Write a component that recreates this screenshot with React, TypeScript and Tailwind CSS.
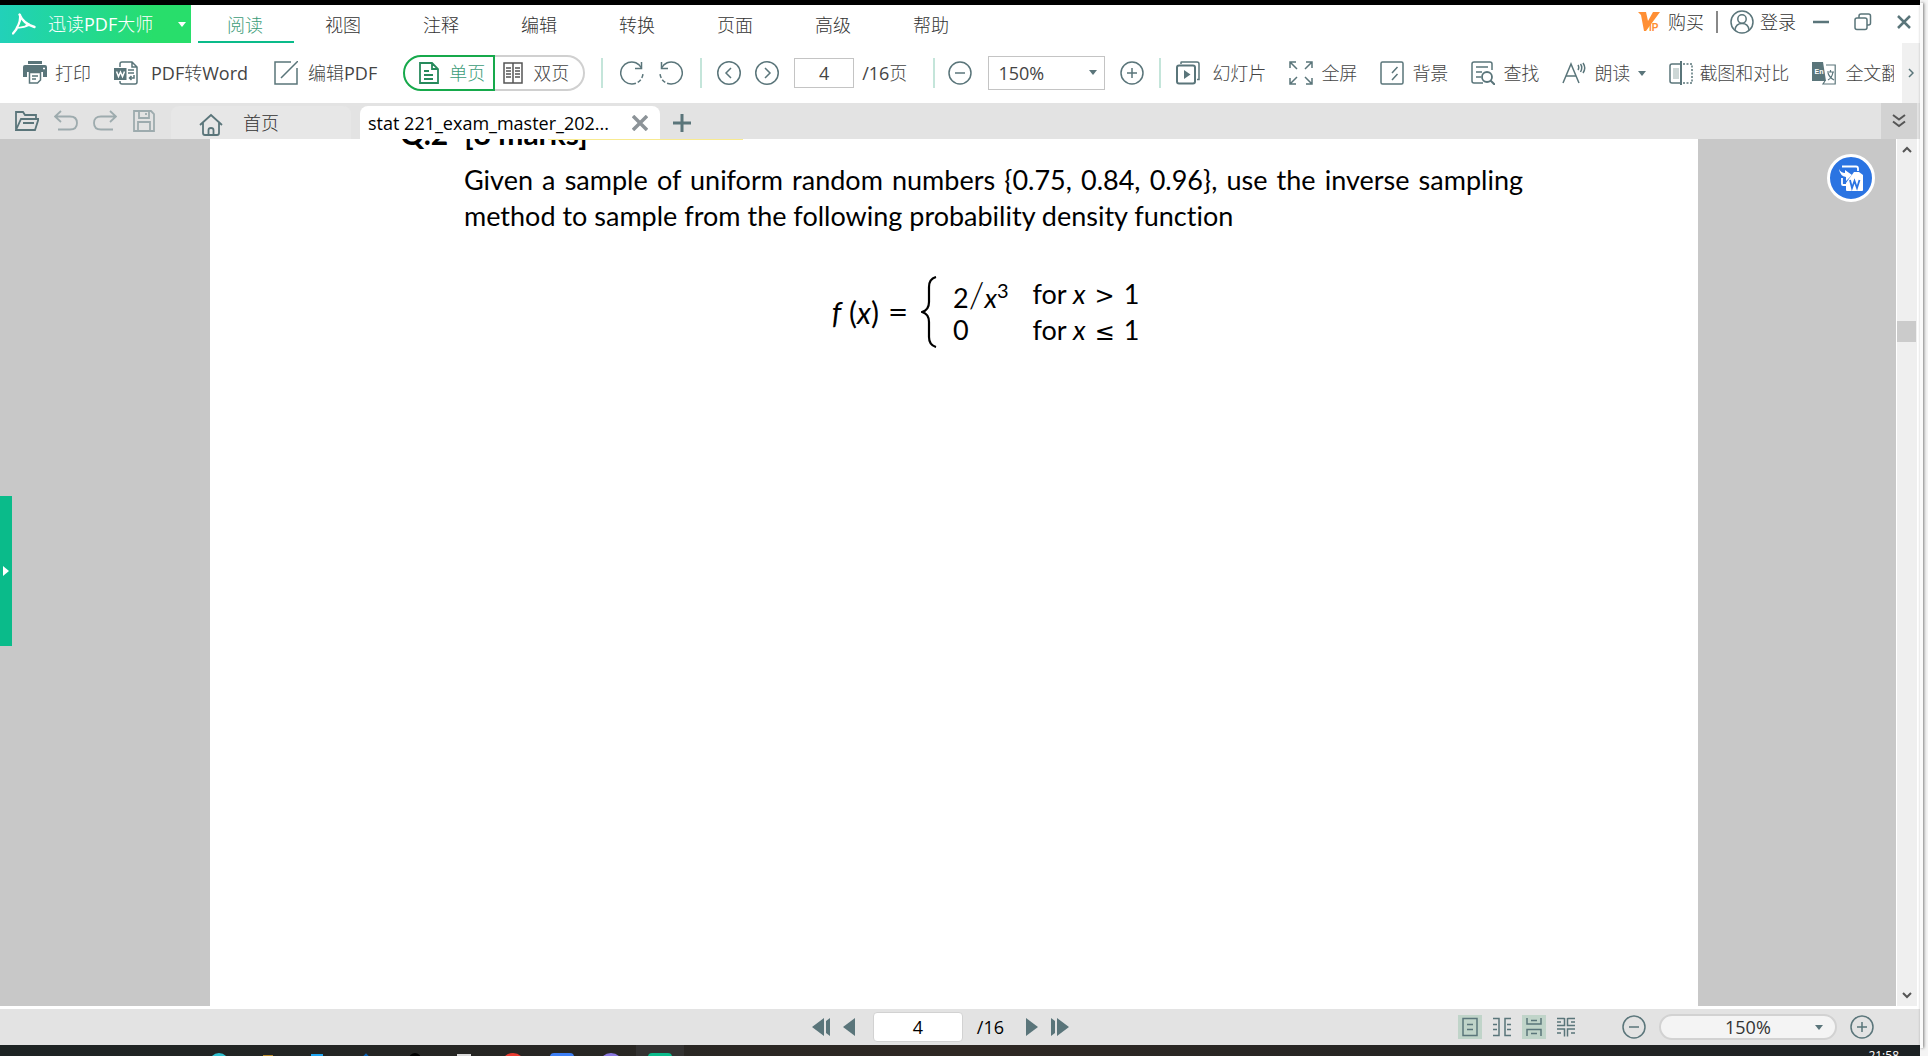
import type { ReactNode } from 'react';

const menu = ['阅读', '视图', '注释', '编辑', '转换', '页面', '高级', '帮助'];

type IconProps = { children: ReactNode; size?: number; className?: string };

const Icon = ({ children, size = 24, className = '' }: IconProps) => (
  <svg
    width={size}
    height={size}
    viewBox="0 0 24 24"
    fill="none"
    stroke="currentColor"
    strokeWidth={1.5}
    className={`shrink-0 text-[#5a757a] ${className}`}
    aria-hidden="true"
  >
    {children}
  </svg>
);

const Caret = ({ className = '' }: { className?: string }) => (
  <svg width={8} height={5} viewBox="0 0 8 5" className={className} aria-hidden="true">
    <path d="M0 0h8L4 5z" fill="currentColor" />
  </svg>
);

const Separator = () => <div className="w-[2px] h-[30px] shrink-0 bg-[#c4e5da]" />;

const MinusCircle = () => (
  <Icon>
    <circle cx="12" cy="12" r="11" />
    <path d="M7 12h10" />
  </Icon>
);

const PlusCircle = () => (
  <Icon>
    <circle cx="12" cy="12" r="11" />
    <path d="M7 12h10M12 7v10" />
  </Icon>
);

const TitleBar = () => (
  <header className="flex items-center justify-between h-[38px] shrink-0">
    <div className="flex h-full">
      <button className="flex items-center w-[191px] h-full pl-3 pr-[5px] text-white bg-linear-to-r from-[#22d1b9] to-[#28de6b] to-80%">
        <svg width={24} height={22} viewBox="0 0 24 22" fill="none" stroke="white" strokeWidth={2.4} className="mr-3" aria-hidden="true">
          <path d="M7.500 1.500c2 5 5 9.500 15 12.500M8 2c1 6-2.500 14-7 18.500M5 14.500c5-.3 8-.5 12-3" strokeLinecap="round" strokeLinejoin="round" />
          <path d="M6.500 14l3-6 4 4.500z" fill="#24d49a" stroke="none" />
        </svg>
        迅读PDF大师
        <Caret className="ml-auto" />
      </button>
      <nav className="flex gap-[2px] ml-[7px]">
        {menu.map((item, i) => (
          <button
            key={item}
            className={`w-[96px] pt-1 pr-[2px] border-b-2 ${i === 0 ? 'border-[#0abb8a] text-[#3c9c78]' : 'border-transparent text-[#333]'}`}
          >
            {item}
          </button>
        ))}
      </nav>
    </div>

    <div className="flex items-center pr-2 pb-1 text-[#333]">
      <button className="flex items-center gap-2">
        <svg width={22} height={22} viewBox="0 0 22 22" className="text-[#ff8f34]" aria-hidden="true">
          <path d="M0 1h8l2 9 5-9h7L8 20H6L3 4z" fill="currentColor" />
          <text x="11" y="20" fontSize="10" fontWeight="700" fill="currentColor" fontFamily="Liberation Sans, sans-serif">
            IP
          </text>
        </svg>
        购买
      </button>
      <div className="w-[2px] h-[22px] mx-3 bg-[#888]" />
      <button className="flex items-center gap-[6px]">
        <Icon>
          <circle cx="12" cy="12" r="11" />
          <circle cx="12" cy="9" r="4.200" />
          <path d="M5 20c.5-4.500 3-6.500 7-6.500s6.500 2 7 6.500" />
        </Icon>
        登录
      </button>
      <button aria-label="最小化" className="ml-4 text-[#5a757a]">
        <svg width={18} height={18} viewBox="0 0 18 18" stroke="currentColor" strokeWidth={2.500}>
          <path d="M1 9h16" />
        </svg>
      </button>
      <button aria-label="还原" className="ml-6 text-[#5a757a]">
        <svg width={18} height={18} viewBox="0 0 18 18" fill="none" stroke="currentColor" strokeWidth={1.500}>
          <rect x="1" y="5" width="12" height="11.500" rx="2" />
          <path d="M5 5V3q0-2 2-2h7.500q2 0 2 2v7q0 2-2 2H13" />
        </svg>
      </button>
      <button aria-label="关闭" className="ml-6 text-[#5a757a]">
        <svg width={16} height={16} viewBox="0 0 16 16" stroke="currentColor" strokeWidth={2.500}>
          <path d="M2 2l12 12M14 2L2 14" />
        </svg>
      </button>
    </div>
  </header>
);

const Toolbar = () => (
  <div className="flex h-[60px] shrink-0 text-[#444]">
    <div className="flex items-center flex-1 min-w-0 mr-2 pl-[23px] overflow-hidden whitespace-nowrap">
      <button className="flex items-center gap-2 mr-[23px]">
        <Icon>
          <path d="M5 0h14v3H5zM0 6q0-2 2-2h20q2 0 2 2v10h-4v-5H4v5H0z" fill="currentColor" stroke="none" />
          <path d="M6.500 11.500h11V19l-3 3h-8z" />
          <path d="M9 15h6M9 18h4" />
          <path d="M20 7.500h2" stroke="white" />
        </Icon>
        打印
      </button>
      <button className="flex items-center gap-[13px] mr-[26px]">
        <Icon>
          <path d="M6 6V3q0-2 2-2h10l5 5v15q0 2-2 2H8q-2 0-2-2v-1M18 1v5h5" />
          <path d="M0 7h12.500v12H0z" fill="currentColor" stroke="none" />
          <path d="M2.500 10.500l2 5 2-4.500 2 4.500 2-5" stroke="white" />
          <path d="M14 9h6M14 12h6M20 14v3h-4M17.500 15l-2 2 2 2" />
        </Icon>
        PDF转Word
      </button>
      <button className="flex items-center gap-[10px] mr-[26px]">
        <Icon>
          <path d="M17 1H1v22h22V7M7 17L24 0" />
        </Icon>
        编辑PDF
      </button>

      <div className="flex h-9 mr-4">
        <button className="flex items-center gap-[10px] w-[92px] pl-[14px] text-[#3c9c78] border-2 border-[#16a94b] rounded-l-full">
          <svg width={20} height={22} viewBox="0 0 20 22" fill="none" stroke="#278a5c" strokeWidth={1.800} aria-hidden="true">
            <path d="M1 1h12l6 6v14H1zM13 1v6h6M5 9h5M5 13h9M5 17h9" />
          </svg>
          单页
        </button>
        <button className="flex items-center gap-[10px] w-[90px] pl-2 border-2 border-l-0 border-[#d0d0d0] rounded-r-full">
          <svg width={20} height={22} viewBox="0 0 20 22" fill="none" stroke="#555" strokeWidth={1.500} aria-hidden="true">
            <path d="M1 1h18v20H1zM10 1v20M3 6h5M3 9h5M3 12h5M3 15h5M12 6h5M12 9h5M12 12h5M12 15h5" />
          </svg>
          双页
        </button>
      </div>

      <Separator />
      <div className="flex gap-[15px] mx-[17px]">
        <button aria-label="顺时针旋转">
          <Icon>
            <path d="M21.500 7A11 11 0 1 0 12 23" />
            <path d="M12 23A11 11 0 0 0 23 12" strokeDasharray="4 2" />
            <path d="M21.500 1v6.500H15" />
          </Icon>
        </button>
        <button aria-label="逆时针旋转">
          <Icon>
            <path d="M2.500 7A11 11 0 1 1 12 23" />
            <path d="M12 23A11 11 0 0 1 1 12" strokeDasharray="4 2" />
            <path d="M2.500 1v6.500H9" />
          </Icon>
        </button>
      </div>
      <Separator />
      <div className="flex items-center gap-[14px] mx-[15px]">
        <button aria-label="上一页">
          <Icon>
            <circle cx="12" cy="12" r="11.250" />
            <path d="M14 7l-5 5 5 5" />
          </Icon>
        </button>
        <button aria-label="下一页">
          <Icon>
            <circle cx="12" cy="12" r="11.250" />
            <path d="M10 7l5 5-5 5" />
          </Icon>
        </button>
      </div>
      <input
        type="text"
        defaultValue="4"
        aria-label="页码"
        className="w-[60px] h-[30px] mr-2 text-center border border-[#c4c4c4]"
      />
      <span className="mr-[26px]">/16页</span>
      <Separator />
      <button aria-label="缩小" className="ml-[13px] mr-4">
        <MinusCircle />
      </button>
      <div className="relative mr-[15px]">
        <select aria-label="缩放" className="block w-[117px] h-[34px] pl-[9px] border border-[#c4c4c4] appearance-none">
          <option>150%</option>
        </select>
        <Caret className="absolute top-[14px] right-2 text-[#5a757a] pointer-events-none" />
      </div>
      <button aria-label="放大" className="mr-[15px]">
        <PlusCircle />
      </button>
      <Separator />

      <button className="flex items-center gap-3 ml-[15px] mr-[23px]">
        <Icon>
          <rect x="1" y="4.500" width="18" height="18" rx="2" strokeWidth={2} />
          <path d="M5 3V1.500q0-.5.500-.5H21q2 0 2 2v15.500h-2" />
          <path d="M8 9l6.500 4.500L8 18z" fill="currentColor" stroke="none" />
        </Icon>
        幻灯片
      </button>
      <button className="flex items-center gap-2 mr-[23px]">
        <Icon>
          <path d="M1 7V1h6M1 1l7 7M17 1h6v6M23 1l-7 7M1 17v6h6M1 23l7-7M23 17v6h-6M23 23l-7-7" />
        </Icon>
        全屏
      </button>
      <button className="flex items-center gap-2 mr-[23px]">
        <Icon>
          <rect x="1" y="1" width="22" height="22" rx="1.500" />
          <path d="M12 12l5.500-6M12 19l5.500-6" />
        </Icon>
        背景
      </button>
      <button className="flex items-center gap-2 mr-[23px]">
        <Icon>
          <path d="M12 22H3q-2 0-2-2V3q0-2 2-2h16q2 0 2 2v6M5 6h12M5 11h6M5 16h5" />
          <circle cx="16" cy="16" r="5" strokeWidth={1.800} />
          <path d="M19.500 19.500L24 24" strokeWidth={2} />
        </Icon>
        查找
      </button>
      <button className="flex items-center gap-2 mr-[23px]">
        <Icon>
          <path d="M1 22L9 3l8 19M4 15h10M16 4q1.500 2.500 0 5M18.500 3q2.500 3.500 0 8M21 2q3.500 5 0 10" />
        </Icon>
        朗读
        <Caret className="text-[#5a757a]" />
      </button>
      <button className="flex items-center gap-[6px] mr-[23px]">
        <Icon>
          <path d="M11 3H3q-2 0-2 2v15q0 2 2 2h8" />
          <path d="M4 7h6v11H4z" fill="#cdd7d6" stroke="none" />
          <path d="M12 0v24" strokeWidth={2} />
          <path d="M14 3h9v19h-9" strokeDasharray="2 1.500" />
        </Icon>
        截图和对比
      </button>
      <button className="flex items-center gap-[9px]">
        <Icon>
          <path d="M0 1h11l3 19H0z" fill="currentColor" stroke="none" />
          <path d="M14 4h9.200v19H11l2-3" strokeWidth={1.200} />
          <path d="M15 11h7M18.500 9v2M16 19q4-2 5-8M16 12q1 4 6 7" strokeWidth={1.200} />
          <text x="2.500" y="13" fontSize="7" fontWeight="700" fill="white" stroke="none" fontFamily="Liberation Sans, sans-serif">
            En
          </text>
        </Icon>
        全文翻译
      </button>
    </div>
    <button aria-label="更多工具" className="flex items-center justify-center w-[18px] bg-[#f0f0f0] text-[#5a757a]">
      <svg width={6} height={10} viewBox="0 0 6 10" fill="none" stroke="currentColor" strokeWidth={1.500}>
        <path d="M1 1l4 4-4 4" />
      </svg>
    </button>
  </div>
);

const TabBar = () => (
  <div className="flex items-end justify-between h-9 shrink-0 pr-[3px] bg-[#e3e3e3]">
    <div className="flex items-center h-full gap-[15px] pl-[15px] w-[171px]">
      <button aria-label="打开">
        <Icon>
          <path d="M1 21V3h7l2 3h11v4M1 21l5-11h17.500L20 21zM8 14h11" strokeWidth={1.800} />
        </Icon>
      </button>
      <button aria-label="撤销">
        <Icon className="opacity-50">
          <path d="M7 2L1 7.500 7 13M1 7.500h15q7 0 7 6.500t-7 6.500H4" strokeWidth={1.800} />
        </Icon>
      </button>
      <button aria-label="重做">
        <Icon className="opacity-50">
          <path d="M17 2l6 5.500L17 13M23 7.500H8q-7 0-7 6.500t7 6.500h12" strokeWidth={1.800} />
        </Icon>
      </button>
      <button aria-label="保存">
        <Icon className="opacity-50">
          <path d="M2 2h17l3 3v17H2zM7 2v7h10V2M6 22v-9h12v9M14 4v2" strokeWidth={1.800} />
        </Icon>
      </button>
    </div>
    <a href="#home" className="flex items-center w-[180px] h-[33px] mr-[9px] pl-7 gap-5 text-[#333] bg-[#e7e7e7] rounded-t-lg">
      <Icon className="mt-1">
        <path d="M1 12L12 2l11 10M4 10v10q0 2 2 2h12q2 0 2-2V10M9.500 22v-5q0-2 2.500-2t2.500 2v5" strokeWidth={1.800} />
      </Icon>
      首页
    </a>
    <div className="flex items-center justify-between w-[300px] h-[33px] pl-2 pr-3 text-black bg-white rounded-t-lg">
      <a href="#doc" className="whitespace-nowrap">
        stat 221_exam_master_202...
      </a>
      <button aria-label="关闭标签">
        <svg width={16} height={16} viewBox="0 0 16 16" stroke="#8c9398" strokeWidth={3.500}>
          <path d="M1 1l14 14M15 1L1 15" />
        </svg>
      </button>
    </div>
    <button aria-label="新建标签" className="h-full pl-[13px] mr-auto">
      <svg width={18} height={18} viewBox="0 0 18 18" stroke="#5a757a" strokeWidth={3} className="mt-1">
        <path d="M0 9h18M9 0v18" />
      </svg>
    </button>
    <button aria-label="展开" className="flex items-center justify-center w-9 h-full bg-[#d2d2d2]">
      <svg width={14} height={14} viewBox="0 0 14 14" fill="none" stroke="#555" strokeWidth={2}>
        <path d="M1 1l6 4.500L13 1M1 7.500L7 12l6-4.500" />
      </svg>
    </button>
  </div>
);

const Operator = ({ children }: { children: ReactNode }) => (
  <span className="mx-[9px] text-2xl leading-none font-['DejaVu_Sans',sans-serif]">{children}</span>
);

const Equation = () => (
  <div className="flex items-center justify-center mt-[42px] pr-4">
    <span className="text-3xl">
      <i>f</i> (<i>x</i>)
    </span>
    <Operator>=</Operator>
    <svg width={16} height={72} viewBox="0 0 16 72" fill="none" stroke="black" strokeWidth={2.200} className="ml-1" aria-hidden="true">
      <path d="M15 1Q8 3 8 11v15q0 8-7 10 7 2 7 10v15q0 8 7 10" />
    </svg>
    <div className="grid grid-cols-[auto_auto] grid-rows-[36px_36px] gap-x-6 ml-4 leading-9">
      <span>
        2<span className="text-4xl leading-none font-light">/</span>
        <i>x</i>
        <sup className="text-xl leading-none">3</sup>
      </span>
      <span>
        for <i>x</i>
        <Operator>&gt;</Operator>1
      </span>
      <span>0</span>
      <span>
        for <i>x</i>
        <Operator>≤</Operator>1
      </span>
    </div>
  </div>
);

const Viewer = () => (
  <main className="flex flex-1 min-h-0 pr-[3px] bg-white">
    <div className="flex flex-1 items-center min-w-0 bg-[#c8c8c8]">
      <button aria-label="展开侧栏" className="flex items-center justify-center w-3 h-[150px] mb-1 bg-[#0abb8a]">
        <svg width={6} height={10} viewBox="0 0 6 10">
          <path d="M0 0l6 5-6 5z" fill="white" />
        </svg>
      </button>
      <div className="relative flex justify-center flex-1 h-full min-w-0">
        <article className="relative w-full max-w-[1488px] pl-[254px] pr-[175px] overflow-hidden text-[27px] leading-9 font-normal text-black bg-white font-['Lato','Noto_Sans',sans-serif] [font-variant-ligatures:none]">
          <div className="absolute top-0 left-[338px] w-[195px] h-px bg-[#f8ea90]" />
          <h2 className="-ml-16 -mt-6 mb-[11px] text-3xl leading-9 font-bold">
            <span className="mr-4">Q.2</span>[8 marks]
          </h2>
          <p className="text-justify">
            Given a sample of uniform random numbers {'{0.75, 0.84, 0.96}'}, use the inverse sampling method to sample
            from the following probability density function
          </p>
          <Equation />
        </article>
        <button
          aria-label="转换为Word"
          className="absolute top-[15px] right-[21px] flex items-center justify-center w-12 h-12 bg-[#2b74e2] border-3 border-white rounded-full"
        >
          <svg width={24} height={26} viewBox="0 0 24 26" fill="none" stroke="white" strokeWidth={1.800}>
            <path d="M3 1.500h14q2 0 2 2V6M3 13v6q0 1 1 1h3" />
            <path d="M0 4q2 4 6 4V5l7 5-6 6v-4Q1 11 0 4z" fill="white" stroke="none" />
            <path d="M15 7h5l4 3v15q0 1-1 1H8q-1 0-1-1v-7z" fill="white" stroke="none" />
            <path d="M11 15l2 8 2.500-7 2.500 7 2.500-8" stroke="#2b74e2" />
          </svg>
        </button>
      </div>
    </div>
    <div className="flex flex-col items-center justify-between w-5 ml-px py-[7px] bg-[#efefef]">
      <svg width={10} height={7} viewBox="0 0 10 7" fill="none" stroke="#555" strokeWidth={2}>
        <path d="M1 6l4-4 4 4" />
      </svg>
      <div className="w-full flex-1 pt-[168px] pr-px">
        <div className="h-[21px] bg-[#cbcbcb]" />
      </div>
      <svg width={10} height={7} viewBox="0 0 10 7" fill="none" stroke="#555" strokeWidth={2}>
        <path d="M1 1l4 4 4-4" />
      </svg>
    </div>
  </main>
);

const StatusBar = () => (
  <footer className="flex items-center h-9 shrink-0 mt-[3px] bg-[#e3e3e3] text-[#5a757a]">
    <div className="flex items-center justify-end w-[1069px]">
      <button aria-label="首页" className="mr-3">
        <svg width={19} height={18} viewBox="0 0 19 18" fill="currentColor">
          <path d="M12 0v18L0 9zM18 0v18l-4-3V3z" />
        </svg>
      </button>
      <button aria-label="前一页" className="mr-[18px]">
        <svg width={12} height={18} viewBox="0 0 12 18" fill="currentColor">
          <path d="M12 0v18L0 9z" />
        </svg>
      </button>
      <input
        type="text"
        defaultValue="4"
        aria-label="当前页"
        className="w-[90px] h-[30px] mr-[14px] text-center text-black bg-white border border-[#d2d2d2] rounded-sm"
      />
      <span className="mr-[22px] text-black">/16</span>
      <button aria-label="后一页" className="mr-3">
        <svg width={12} height={18} viewBox="0 0 12 18" fill="currentColor">
          <path d="M0 0v18l12-9z" />
        </svg>
      </button>
      <button aria-label="末页">
        <svg width={19} height={18} viewBox="0 0 19 18" fill="currentColor">
          <path d="M7 0v18l12-9zM1 0v18l4-3V3z" />
        </svg>
      </button>
    </div>

    <div className="flex items-center ml-auto pr-[46px]">
      <div className="flex gap-2 mr-11">
        <button aria-label="单页视图" className="bg-[#c0d4c9]">
          <Icon>
            <path d="M5 3.500h14v17H5zM9 9.500h6M9 14.500h6" />
          </Icon>
        </button>
        <button aria-label="双页视图">
          <Icon>
            <path d="M3 3.500h6v17H3M21 3.500h-6v17h6M3 9.500h4M3 14.500h4M17 9.500h4M17 14.500h4" />
          </Icon>
        </button>
        <button aria-label="连续视图" className="bg-[#c0d4c9]">
          <Icon>
            <path d="M5 3v6h14V3M5 21v-6.500h14V21M9 5.500h6M9 18.500h6" />
          </Icon>
        </button>
        <button aria-label="双页连续视图">
          <Icon>
            <path d="M3 3.500h7.500M13.500 3.500H21M10.500 3v7.500H3M13.500 3v7.500H21M3 14h7.500v7.500M21 14h-7.500v7.500M3 7h4M17 7h4M3 18h4M17 18h4" />
          </Icon>
        </button>
      </div>
      <button aria-label="缩小页面" className="mr-[13px]">
        <MinusCircle />
      </button>
      <div className="relative mr-[13px]">
        <select
          aria-label="页面缩放"
          className="block w-[178px] h-[26px] pl-[64px] leading-[22px] text-[#333] bg-[#f4f4f4] border-2 border-[#d2d2d2] rounded-full appearance-none"
        >
          <option>150%</option>
        </select>
        <Caret className="absolute top-[11px] right-[14px] pointer-events-none" />
      </div>
      <button aria-label="放大页面">
        <PlusCircle />
      </button>
    </div>
  </footer>
);

const taskIcons = [
  'w-5 h-5 mt-2 rounded-full bg-[#2fc0d0]',
  'w-[10px] h-2 mt-[10px] bg-[#b8892a]',
  'w-3 h-3 mt-[9px] bg-[#1fa4f0]',
  'w-2 h-2 mt-[10px] rotate-45 bg-[#0b62b5]',
  'w-3 h-3 mt-[8px] rounded-full bg-black',
  'w-[14px] h-3 mt-[9px] bg-[#d9d9d9]',
  'w-6 h-6 mt-2 rounded-full bg-[#e93a2f]',
  'w-6 h-6 mt-2 rounded-sm bg-[#3d7ff5]',
  'w-6 h-6 mt-2 rounded-full border-3 border-[#8a78e0] bg-white',
  'w-6 h-6 mt-2 rounded-sm bg-[#0abb8a]',
];

const Taskbar = () => (
  <div className="flex justify-between h-[11px] shrink-0 overflow-hidden bg-linear-to-r from-[#1d2323] via-[#2e2823] to-[#1c2123]">
    <div className="flex gap-px pl-[195px]">
      {taskIcons.map((icon, i) => (
        <div key={icon} className={`flex justify-center items-start w-12 h-12 ${i === 9 ? 'bg-[#333231]' : ''}`}>
          <div className={icon} />
        </div>
      ))}
    </div>
    <time className="pt-[3px] pr-[21px] text-xs text-white">21:58</time>
  </div>
);

const App = () => {
  return (
    <div className="flex h-screen bg-[#f4f4f4] text-lg font-normal font-['Open_Sans','Noto_Sans_CJK_SC_Light','Noto_Sans_CJK_SC',sans-serif]">
      <div className="flex flex-col flex-1 min-w-0">
        <div className="h-[5px] shrink-0 bg-black" />
        <div className="flex flex-col flex-1 min-h-0 bg-white">
          <TitleBar />
          <Toolbar />
          <TabBar />
          <Viewer />
          <StatusBar />
        </div>
        <Taskbar />
      </div>
      <div className="w-2 pt-[3px]">
        <div className="w-[3px] h-[calc(100%-8px)] bg-[#fafafa] shadow-[1px_0_3px_rgba(0,0,0,0.5)]" />
      </div>
    </div>
  );
};

export default App;
